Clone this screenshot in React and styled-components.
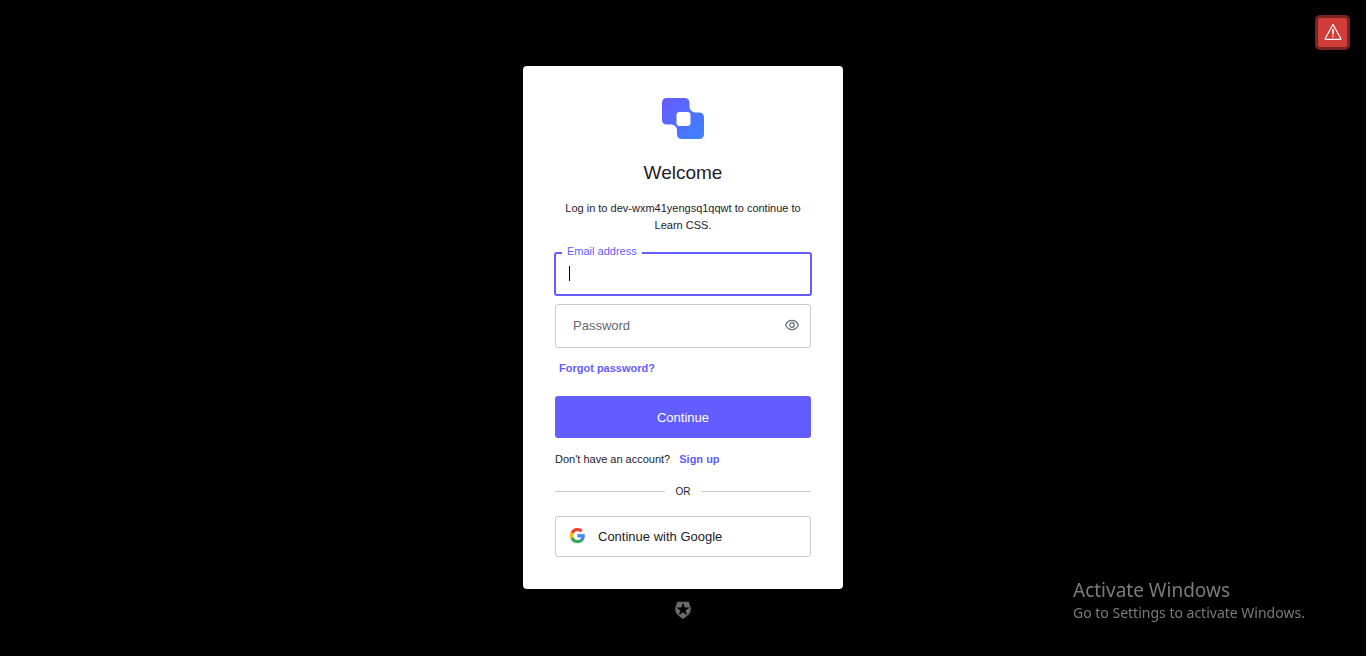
import React, { useState } from 'react';
import styled, { createGlobalStyle } from 'styled-components';

const GlobalStyle = createGlobalStyle`
  * {
    box-sizing: border-box;
  }

  body {
    margin: 0;
    background: #000;
    color: #1e212a;
    font-family: "Liberation Sans", Arial, sans-serif;
    font-size: 11px;
  }

  button, input {
    font-family: inherit;
  }
`;

const Page = styled.main`
  display: flex;
  flex-direction: column;
  align-items: center;
  gap: 12px;
  min-height: 100vh;
  padding: 66px 16px 32px;
`;

const Card = styled.section`
  display: flex;
  flex-direction: column;
  width: 100%;
  max-width: 320px;
  padding: 32px;
  background: #fff;
  border-radius: 4px;
`;

const Logo = styled.svg`
  width: 42px;
  height: 42px;
  align-self: center;
`;

const Title = styled.h1`
  margin: 21px 0 15px;
  font-size: 19px;
  line-height: 24px;
  font-weight: 400;
  text-align: center;
`;

const Description = styled.p`
  margin: 0 0 18px;
  line-height: 17px;
  text-align: center;
`;

const Form = styled.form`
  display: flex;
  flex-direction: column;
`;

const Field = styled.div`
  position: relative;
  margin: ${props => props.$active ? '0 -1px 8px' : '0 0 11px'};
`;

const Input = styled.input`
  display: block;
  width: 100%;
  height: 44px;
  padding: 0 40px 0 14px;
  color: #1e212a;
  font-size: 13px;
  background: #fff;
  border: ${props => props.$active ? '2px solid #635dff' : '1px solid #c9cace'};
  border-radius: 3px;
  outline: none;
  caret-color: transparent;
`;

const FloatingLabel = styled.label`
  position: absolute;
  top: -9px;
  left: 8px;
  padding: 0 5px;
  color: #635dff;
  font-size: 11px;
  line-height: 16px;
  background: #fff;
`;

const InnerLabel = styled.label`
  position: absolute;
  top: 14px;
  left: 18px;
  color: #65676e;
  font-size: 13px;
  line-height: 16px;
  pointer-events: none;
`;

const Caret = styled.span`
  position: absolute;
  top: 14px;
  left: 15px;
  width: 1px;
  height: 15px;
  background: #000;
`;

const RevealButton = styled.button`
  position: absolute;
  top: 12px;
  right: 10px;
  display: flex;
  align-items: center;
  justify-content: center;
  width: 18px;
  height: 18px;
  padding: 0;
  color: #65676e;
  background: none;
  border: none;
  cursor: pointer;
`;

const TextLink = styled.a`
  color: #635dff;
  font-weight: 700;
  line-height: 18px;
  text-decoration: none;

  &:hover {
    text-decoration: underline;
  }
`;

const ForgotRow = styled.div`
  padding-left: 4px;
  margin-bottom: 19px;
  line-height: 18px;
`;

const SubmitButton = styled.button`
  height: 42px;
  color: #fff;
  font-size: 13px;
  background: #635dff;
  border: none;
  border-radius: 3px;
  cursor: pointer;
`;

const SignUpRow = styled.p`
  display: flex;
  gap: 9px;
  margin: 12px 0 14px;
  line-height: 18px;
`;

const Divider = styled.div`
  display: flex;
  align-items: center;
  gap: 11px;
  margin-bottom: 15px;
  font-size: 10px;
  line-height: 19px;

  &::before, &::after {
    content: '';
    flex: 1;
    height: 1px;
    background: #c9cace;
  }
`;

const SocialButton = styled.button`
  display: flex;
  align-items: center;
  gap: 13px;
  height: 41px;
  padding: 0 13px;
  color: #1e212a;
  font-size: 13px;
  background: #fff;
  border: 1px solid #c9cace;
  border-radius: 3px;
  cursor: pointer;
`;

const BadgeLink = styled.a`
  display: flex;
`;

const AlertButton = styled.button`
  position: fixed;
  top: 15px;
  right: 16px;
  display: flex;
  align-items: center;
  justify-content: center;
  width: 35px;
  height: 35px;
  padding: 0 0 2px;
  color: #fff;
  background: #d03c38;
  border: 3px solid #7a2324;
  border-radius: 5px;
  cursor: pointer;
`;

const Watermark = styled.aside`
  position: fixed;
  right: 57px;
  bottom: 33px;
  min-width: 236px;
  color: #7b7b7b;
  font-family: "Noto Sans", "Open Sans", sans-serif;
  font-size: 14px;
  line-height: 20px;
`;

const WatermarkTitle = styled.div`
  font-size: 19px;
  line-height: 26px;
`;

function AppLogo() {
  return (
    <Logo viewBox="0 0 42 42" aria-label="Learn CSS">
      <defs>
        <linearGradient id="logo-fill" x1="0" y1="0" x2="1" y2="1">
          <stop offset="0.1" stopColor="#635dff" />
          <stop offset="0.9" stopColor="#3f80ff" />
        </linearGradient>
      </defs>
      <path
        fill="url(#logo-fill)"
        d="M5 0H22Q27.500 0 27.500 5V9Q28 13.500 33 14.500H37Q42 14.500 42 19.500V36Q42 41 37 41H20Q15 41 15 36V32Q14.500 27.500 10 26.500H5Q0 26.500 0 21.500V5Q0 0 5 0Z"
      />
      <rect x="14.500" y="14" width="14" height="14" rx="3" fill="#fff" />
    </Logo>
  );
}

function EyeIcon() {
  return (
    <svg width="14" height="12" viewBox="0 0 14 12" fill="none" stroke="currentColor" strokeWidth="1.2">
      <path d="M.6 6C2 3 4.300 1.300 7 1.300S12 3 13.400 6C12 9 9.700 10.700 7 10.700S2 9 .6 6Z" />
      <circle cx="7" cy="6" r="2.300" />
    </svg>
  );
}

function GoogleIcon() {
  return (
    <svg width="16" height="17" viewBox="-3 0 51 54">
      <path fill="#EA4335" stroke="#EA4335" d="M24 9.500c3.540 0 6.710 1.220 9.210 3.600l6.850-6.850C35.900 2.380 30.470 0 24 0 14.620 0 6.510 5.380 2.560 13.220l7.980 6.190C12.430 13.720 17.740 9.500 24 9.500z" />
      <path fill="#4285F4" stroke="#4285F4" d="M46.980 24.550c0-1.570-.15-3.090-.38-4.550H24v9.020h12.940c-.58 2.960-2.260 5.480-4.780 7.180l7.730 6c4.510-4.180 7.090-10.360 7.090-17.650z" />
      <path fill="#FBBC05" stroke="#FBBC05" d="M10.530 28.590c-.48-1.450-.76-2.990-.76-4.590s.27-3.140.76-4.590l-7.980-6.190C.92 16.460 0 20.120 0 24s.92 7.540 2.560 10.780l7.970-6.190z" />
      <path fill="#34A853" stroke="#34A853" d="M24 48c6.480 0 11.930-2.130 15.890-5.810l-7.730-6c-2.150 1.450-4.920 2.300-8.160 2.300-6.260 0-11.570-4.220-13.470-9.910l-7.980 6.190C6.510 42.620 14.620 48 24 48z" />
    </svg>
  );
}

function ShieldIcon() {
  return (
    <svg width="16" height="18" viewBox="0 0 16 18">
      <path
        fill="#6b6b6b"
        fillRule="evenodd"
        d="M2.300 .8H13.700L15.500 6C16.500 10 15 13 11.800 15.300L8 18L4.200 15.300C1 13 -.5 10 .5 6ZM8 1.600L6.400 6.500H1.300L5.400 9.500L3.900 14.300L8 11.300L12.100 14.300L10.600 9.500L14.700 6.500H9.600Z"
      />
    </svg>
  );
}

function WarningIcon() {
  return (
    <svg width="18" height="18" viewBox="0 0 18 18" fill="none" stroke="currentColor" strokeWidth="1.200" strokeLinejoin="round" strokeLinecap="round">
      <path d="M9 1.500L16.800 15.500Q17 16.300 16.300 16.300H1.700Q1 16.300 1.200 15.500Z" />
      <path d="M9 6.500V11M9 13.200V13.400" strokeWidth="1.500" />
    </svg>
  );
}

function App() {
  const [email, setEmail] = useState('');
  const [password, setPassword] = useState('');
  const [revealed, setRevealed] = useState(false);

  return (
    <>
      <GlobalStyle />
      <Page>
        <Card>
          <AppLogo />
          <Title>Welcome</Title>
          <Description>Log in to dev-wxm41yengsq1qqwt to continue to Learn CSS.</Description>

          <Form onSubmit={(e) => e.preventDefault()}>
            <Field $active>
              <Input
                $active
                id="email"
                type="email"
                value={email}
                onChange={(e) => setEmail(e.target.value)}
              />
              <FloatingLabel htmlFor="email">Email address</FloatingLabel>
              {!email && <Caret />}
            </Field>

            <Field>
              <Input
                id="password"
                type={revealed ? 'text' : 'password'}
                value={password}
                onChange={(e) => setPassword(e.target.value)}
              />
              {!password && <InnerLabel htmlFor="password">Password</InnerLabel>}
              <RevealButton type="button" aria-label="Show password" onClick={() => setRevealed(!revealed)}>
                <EyeIcon />
              </RevealButton>
            </Field>

            <ForgotRow>
              <TextLink href="#forgot">Forgot password?</TextLink>
            </ForgotRow>

            <SubmitButton type="submit">Continue</SubmitButton>
          </Form>

          <SignUpRow>
            Don't have an account?
            <TextLink href="#signup">Sign up</TextLink>
          </SignUpRow>

          <Divider>OR</Divider>

          <SocialButton type="button">
            <GoogleIcon />
            Continue with Google
          </SocialButton>
        </Card>

        <BadgeLink href="#auth0" aria-label="Auth0">
          <ShieldIcon />
        </BadgeLink>
      </Page>

      <AlertButton type="button" aria-label="Warning">
        <WarningIcon />
      </AlertButton>

      <Watermark>
        <WatermarkTitle>Activate Windows</WatermarkTitle>
        Go to Settings to activate Windows.
      </Watermark>
    </>
  );
}

export default App;
